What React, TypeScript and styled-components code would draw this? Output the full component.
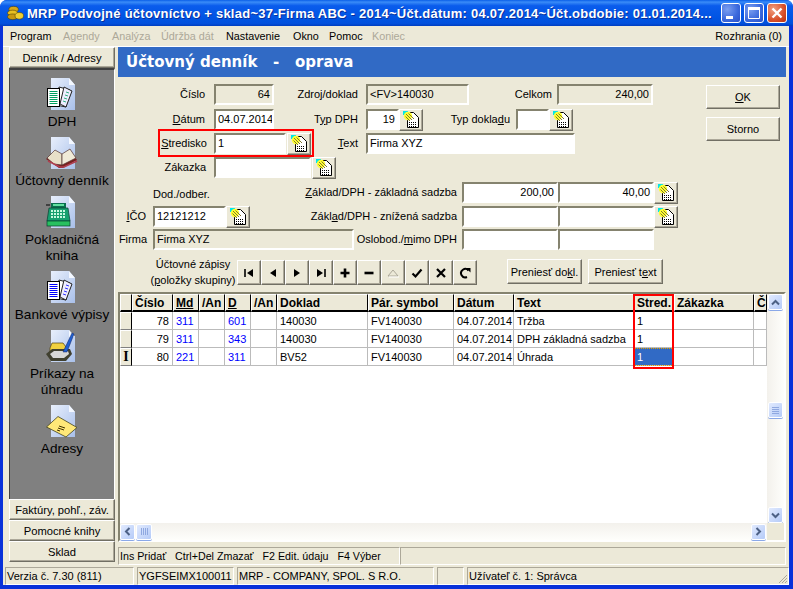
import React from 'react';
import styled, { createGlobalStyle, css } from 'styled-components';

const Global = createGlobalStyle`
  html, body { margin: 0; padding: 0; background: #fff; }
  body { width: 793px; height: 589px; overflow: hidden; font-family: "Liberation Sans", Arial, sans-serif; font-size: 11px; color: #000; }
  * { box-sizing: border-box; }
`;

const raised = css`
  border: 1px solid;
  border-color: #fff #716f64 #716f64 #fff;
  box-shadow: inset -1px -1px 0 #aca899;
  background: #ece9d8;
`;
const sunken = css`
  border: 2px solid;
  border-color: #85836f #fff #fff #85836f;
`;

const Window = styled.div`
  width: 793px; height: 589px;
  display: flex; flex-direction: column;
  background: #0831d9;
  border-radius: 7px 7px 0 0;
  overflow: hidden;
`;
const TitleBar = styled.div`
  height: 26px; flex: none;
  display: flex; align-items: center;
  padding: 0 6px 0 7px;
  background: linear-gradient(180deg, #0a5fe8 0%, #3a8cf8 8%, #0a5cec 22%, #0054e3 70%, #0250dc 90%, #003dc0 100%);
`;
const TitleText = styled.div`
  flex: 1; min-width: 0; margin-left: 3px;
  color: #fff; font-weight: bold; font-size: 13px; letter-spacing: 0.25px; white-space: nowrap;
  text-shadow: 1px 1px 0 #0a2f9a;
`;
const WinButton = styled.div<{ $close?: boolean }>`
  width: 20px; height: 20px; margin-left: 3px; flex: none;
  border: 1px solid #fff; border-radius: 3px;
  display: flex; align-items: center; justify-content: center;
  background: ${p => p.$close
    ? 'radial-gradient(circle at 30% 30%, #f0a080, #d8502a 60%, #b83010)'
    : 'radial-gradient(circle at 30% 30%, #7a9ef0, #3a68dc 60%, #2a50c8)'};
`;
const Client = styled.div`
  flex: 1; min-height: 0;
  margin: 0 4px 4px 3px;
  background: #ece9d8;
  display: flex; flex-direction: column;
`;
const MenuBar = styled.div`
  height: 21px; flex: none;
  display: flex; align-items: center;
  padding: 0 7px 1px 7px;
  border-bottom: 1px solid #fff;
`;
const MenuItem = styled.span<{ $off?: boolean; $w: number }>`
  width: ${p => p.$w}px; flex: none; white-space: nowrap; font-size: 10.8px;
  color: ${p => p.$off ? '#aca899' : '#000'};
`;
const MenuRight = styled.span`
  margin-left: auto; font-size: 11px;
`;
const Body = styled.div`
  flex: 1; min-height: 0;
  display: flex;
`;
const Sidebar = styled.div`
  width: 106px; margin-left: 6px; flex: none;
  display: flex; flex-direction: column;
  padding-bottom: 1px;
`;
const SideTab = styled.div`
  ${raised}
  height: 21px; flex: none;
  display: flex; align-items: center; justify-content: center;
  font-size: 11.2px;
`;
const NavPanel = styled.div`
  flex: 1; min-height: 0;
  background: #808080;
  border-top: 2px solid #404040;
  border-left: 1px solid #404040;
  border-right: 1px solid #fff;
  padding-top: 8px;
  display: flex; flex-direction: column; align-items: center;
`;
const NavItem = styled.div`
  display: flex; flex-direction: column; align-items: center;
  padding-bottom: 7px;
  width: 100%;
`;
const NavLabel = styled.div`
  margin-top: 3px;
  font-size: 13.6px; line-height: 16px; text-align: center; color: #000;
`;
const Main = styled.div`
  flex: 1; min-width: 0;
  margin: 0 3px 0 3px;
  display: flex; flex-direction: column;
`;
const Banner = styled.div`
  height: 30px; flex: none;
  background: #316ac5;
  color: #fff;
  font-family: "DejaVu Sans", sans-serif;
  font-weight: bold; font-size: 15px;
  display: flex; align-items: center;
  padding-left: 8px;
  white-space: pre;
`;
const FormArea = styled.div`
  flex: none;
  display: flex;
  position: relative;
  height: 215px;
`;
const FormCol = styled.div`
  width: 580px; flex: none;
  display: flex; flex-direction: column;
`;
const FormRow = styled.div<{ $mt: number }>`
  display: flex; align-items: center; height: 21px; margin-top: ${p => p.$mt}px; flex: none;
`;
const Label = styled.div<{ $w: number }>`
  width: ${p => p.$w}px; flex: none; text-align: right; font-size: 11px; white-space: nowrap; padding-bottom: 2px;
`;
const Field = styled.div<{ $w: number; $ml?: number; $ro?: boolean; $right?: boolean }>`
  ${sunken}
  width: ${p => p.$w}px; height: 21px; flex: none;
  margin-left: ${p => p.$ml ?? 0}px;
  background: ${p => p.$ro ? '#ece9d8' : '#fff'};
  font-size: 11px; line-height: 16px;
  padding: 0 2px;
  text-align: ${p => p.$right ? 'right' : 'left'};
  white-space: nowrap; overflow: hidden;
`;
const Lookup = styled.div<{ $ml?: number }>`
  ${raised}
  width: 24px; height: 22px; flex: none;
  margin-left: ${p => p.$ml ?? 0}px;
  display: flex; align-items: center; justify-content: center;
`;
const Side = styled.div`
  margin-left: 8px; padding-top: 8px;
  display: flex; flex-direction: column; gap: 8px;
`;
const DialogButton = styled.div`
  ${raised}
  width: 74px; height: 24px;
  display: flex; align-items: center; justify-content: center;
  font-size: 11px;
`;
const Highlight = styled.div`
  position: absolute; left: 40px; top: 52px; width: 156px; height: 28px;
  border: 2px solid #f00; pointer-events: none;
`;
const DodLabel = styled.div`
  width: 92px; flex: none; font-size: 11px; padding-left: 35px; white-space: nowrap; margin-top: 3px;
`;
const ToolRow = styled.div`
  display: flex; align-items: center; margin-top: 9px; height: 27px; flex: none;
`;
const ToolLabel = styled.div`
  width: 100px; flex: none; margin-left: 25px; margin-right: -6px; text-align: center; font-size: 11px; line-height: 16px;
  padding-bottom: 1px; white-space: nowrap;
`;
const ToolGroup = styled.div`
  display: flex; margin-right: 30px;
`;
const ToolButton = styled.div`
  ${raised}
  width: 24px; height: 25px;
  display: flex; align-items: center; justify-content: center;
`;
const TextButton = styled.div`
  ${raised}
  width: 75px; height: 25px; margin-right: 6px; margin-top: -2px;
  display: flex; align-items: center; justify-content: center;
  font-size: 11px; white-space: nowrap;
`;
const GridFrame = styled.div`
  ${sunken}
  flex: none; height: 250px; width: 668px;
  display: flex; flex-direction: column;
  background: #fff;
`;
const GridTop = styled.div`
  flex: 1; min-height: 0; display: flex;
`;
const GridArea = styled.div`
  width: 647px; flex: none; position: relative; overflow: hidden;
`;
const Table = styled.table`
  border-collapse: separate; border-spacing: 0; table-layout: fixed; width: 647px;
`;
const Th = styled.th<{ $u?: boolean }>`
  height: 18px; padding: 0 2px; text-align: left;
  background: #ece9d8;
  border-top: 1px solid #fff; border-left: 1px solid #fff;
  border-right: 1px solid #000; border-bottom: 2px solid #000;
  font-family: "Liberation Sans", sans-serif; font-size: 12px; font-weight: bold; white-space: nowrap; overflow: hidden;
  text-decoration: ${p => p.$u ? 'underline' : 'none'};
`;
const Td = styled.td<{ $blue?: boolean; $right?: boolean; $sel?: boolean }>`
  height: 18px; padding: 0 3px;
  border-right: 1px solid #bbb; border-bottom: 1px solid #bbb;
  font-size: 11px; white-space: nowrap; overflow: hidden;
  color: ${p => p.$sel ? '#fff' : p.$blue ? '#0000ff' : '#000'};
  text-align: ${p => p.$right ? 'right' : 'left'};
  background: ${p => p.$sel ? '#316ac5' : '#fff'};
  outline: ${p => p.$sel ? '1px dotted #e0a000' : 'none'};
  outline-offset: -1px;
`;
const Indicator = styled.td`
  height: 18px; padding: 0; text-align: center;
  background: #ece9d8;
  border-top: 1px solid #fff; border-left: 1px solid #fff;
  border-right: 1px solid #000; border-bottom: 1px solid #808080;
  font-family: "Liberation Serif", serif; font-size: 14px; font-weight: bold; line-height: 14px;
`;
const ColMark = styled.div`
  position: absolute; left: 513px; top: 0; width: 41px; height: 75px;
  border: 2px solid #f00; pointer-events: none;
`;
const VScroll = styled.div`
  width: 17px; flex: none;
  display: flex; flex-direction: column; align-items: center;
  background: linear-gradient(90deg, #f3f1ec, #fefefb);
`;
const ScrollButton = styled.div`
  width: 15px; height: 16px; flex: none;
  border: 1px solid #fff; border-radius: 2px;
  background: linear-gradient(135deg, #e1eafe, #b5cbf8);
  box-shadow: 0 1px 0 #8aa8e8;
  display: flex; align-items: center; justify-content: center;
`;
const VThumb = styled(ScrollButton)`
  margin-top: 92px; margin-bottom: auto;
`;
const HScroll = styled.div`
  height: 17px; flex: none;
  display: flex; align-items: center;
  background: linear-gradient(180deg, #f3f1ec, #fefefb);
`;
const HThumb = styled(ScrollButton)`
  margin-left: 1px; margin-right: auto; width: 16px;
`;
const Corner = styled.div`
  width: 17px; height: 17px; background: #ece9d8; flex: none; margin-left: 1px;
`;
const Hints = styled.div`
  height: 18px; flex: none; margin-top: 5px;
  display: flex;
`;
const HintCell = styled.div<{ $w?: number }>`
  border: 1px solid; border-color: #aca899 #fff #fff #aca899;
  ${p => p.$w ? `width:${p.$w}px; flex:none;` : 'flex:1;'}
  font-size: 10.7px; line-height: 16px; padding-left: 1px; white-space: pre; overflow: hidden;
`;
const StatusBar = styled.div`
  height: 18px; flex: none; margin-top: 4px;
  display: flex; gap: 3px; padding-left: 2px;
`;
const StatusCell = styled.div<{ $w?: number }>`
  border: 1px solid; border-color: #aca899 #fff #fff #aca899;
  ${p => p.$w ? `width:${p.$w}px; flex:none;` : 'flex:1; position:relative;'}
  font-size: 11px; line-height: 16px; padding-left: 1px; white-space: nowrap; overflow: hidden;
`;
const Grip = styled.svg`
  position: absolute; right: 0; bottom: 0;
`;
const TitleLogo = styled.svg`
  flex: none;
`;

const LookupIcon = () => (
  <svg width="17" height="17" viewBox="0 0 17 17">
    <rect x="0" y="0" width="5" height="4" fill="#00e8e8" />
    <path d="M4.5 1.5H10.5L15.5 6.5V16.5H4.5Z" fill="#fff" stroke="#000" />
    <circle cx="5" cy="5" r="4.2" fill="#ffff30" />
    <path d="M3 3L9 9M5.5 2.5L11 8M2.5 5.5L7 10" stroke="#807830" strokeWidth="1" />
    <path d="M6 11.5H14M6 13.5H14M6 15.5H14" stroke="#000" strokeWidth="1" strokeDasharray="1 1" />
  </svg>
);

const Doc = () => (
  <>
    <path d="M5 0H23L29 7V32H5Z" fill="url(#docg)" />
    <path d="M23 0L29 7H23Z" fill="#f4f8ff" />
  </>
);
const Defs = () => (
  <defs>
    <linearGradient id="docg" x1="0" y1="0" x2="1" y2="1">
      <stop offset="0" stopColor="#e8effc" />
      <stop offset="1" stopColor="#a9c0ea" />
    </linearGradient>
  </defs>
);
const NavSvg = styled.svg`
  display: block; width: 32px; height: 33px; flex: none;
`;
const Sheets = ({ color }: { color: string }) => (
  <>
    <path d="M13 9L24 12L20 29L10 27Z" fill="#fff" stroke="#222" />
    <path d="M18 9L26 13L20 29L14 26Z" fill="#eef" stroke="#222" />
    <path d="M20 14L23 15M19 17L22 18M18 20L21 21M17 23L20 24" stroke={color} strokeWidth=".8" />
    <rect x="1.5" y="10.5" width="12" height="18" fill="#fff" stroke="#000" />
    {[13, 15, 17, 19, 21, 23, 25].map(y => (
      <path key={y} d={`M3.5 ${y + 0.5}H11.5`} stroke={color} strokeWidth="1" />
    ))}
  </>
);
const IconDph = () => (
  <NavSvg viewBox="0 0 32 33"><Defs /><Doc /><Sheets color="#00a060" /></NavSvg>
);
const IconBook = () => (
  <NavSvg viewBox="0 0 32 33"><Defs /><Doc />
    <path d="M0 22L9 14L16 18L24 13L31 23L17 31H13Z" fill="#7a2020" />
    <path d="M1 21L9 13L16 17L16 28L8 27Z" fill="#e8e0c8" stroke="#503030" strokeWidth=".7" />
    <path d="M16 17L24 12L30 21L16 28Z" fill="#f0ead8" stroke="#503030" strokeWidth=".7" />
    <path d="M2 24L14 30H18L31 24" stroke="#b04050" strokeWidth="1.5" fill="none" />
  </NavSvg>
);
const IconCash = () => (
  <NavSvg viewBox="0 0 32 33"><Defs /><Doc />
    <path d="M0 9H4" stroke="#000" />
    <rect x="5" y="7" width="15" height="5" fill="#0a7050" />
    <rect x="7" y="8" width="11" height="2" fill="#60e0a0" />
    <path d="M3 12H22L24 25H1Z" fill="#18a070" stroke="#084030" strokeWidth=".7" />
    {[14, 17, 20].map(y => [5, 8, 11, 14, 17].map(x => (
      <rect key={`${x}-${y}`} x={x} y={y} width="2" height="2" fill="#c8f8e0" />
    )))}
    <rect x="1" y="25" width="23" height="5" fill="#28c060" stroke="#084030" strokeWidth=".7" />
  </NavSvg>
);
const IconBank = () => (
  <NavSvg viewBox="0 0 32 33"><Defs /><Doc /><Sheets color="#0000ff" /></NavSvg>
);
const IconOrder = () => (
  <NavSvg viewBox="0 0 32 33"><Defs /><Doc />
    <path d="M4 18L6 13H17L20 17V24H4Z" fill="#f0d040" stroke="#504010" strokeWidth=".7" />
    <path d="M0 24L6 19H24L26 24L20 31H5Z" fill="#404030" />
    <path d="M4 24L8 21H22L23 24L18 28H7Z" fill="#d8d8d8" />
    <path d="M17 22L26 3L28 4L21 22Z" fill="#2060d0" stroke="#102060" strokeWidth=".5" />
  </NavSvg>
);
const IconMail = () => (
  <NavSvg viewBox="0 0 32 33"><Defs /><Doc />
    <path d="M0.5 22L12 11.5L31 22.5L20 32Z" fill="#ffe878" stroke="#404020" strokeWidth=".8" />
    <path d="M13 21L19 23M12 23L18 25M11 25L14 26" stroke="#403000" strokeWidth="1" />
  </NavSvg>
);
const CoinsIcon = () => (
  <TitleLogo width="17" height="18" viewBox="0 0 18 18">
    <ellipse cx="7" cy="5" rx="5" ry="3" fill="#d8a818" stroke="#504000" strokeWidth=".6" />
    <ellipse cx="6" cy="9" rx="5.5" ry="3" fill="#e8c020" stroke="#504000" strokeWidth=".6" />
    <ellipse cx="6" cy="13" rx="5.5" ry="3" fill="#c89810" stroke="#504000" strokeWidth=".6" />
    <ellipse cx="13" cy="12" rx="4.5" ry="3.5" fill="#f0d030" stroke="#504000" strokeWidth=".6" />
  </TitleLogo>
);
const ToolIcon = ({ children }: { children: React.ReactNode }) => (
  <svg width="12" height="12" viewBox="0 0 12 12">{children}</svg>
);

const navItems = [
  { icon: <IconDph />, lines: ['DPH'] },
  { icon: <IconBook />, lines: ['Účtovný denník'] },
  { icon: <IconCash />, lines: ['Pokladničná', 'kniha'] },
  { icon: <IconBank />, lines: ['Bankové výpisy'] },
  { icon: <IconOrder />, lines: ['Príkazy na', 'úhradu'] },
  { icon: <IconMail />, lines: ['Adresy'] },
];

const colWidths = [12, 41, 26, 26, 26, 26, 91, 86, 60, 120, 40, 80, 13];
const rows = [
  { n: '78', md: '311', d: '601', doc: '140030', text: 'Tržba', mark: '' },
  { n: '79', md: '311', d: '343', doc: '140030', text: 'DPH základná sadzba', mark: '' },
  { n: '80', md: '221', d: '311', doc: 'BV52', text: 'Úhrada', mark: 'I' },
];

export default function App() {
  return (
    <Window>
      <Global />
      <TitleBar>
        <CoinsIcon />
        <TitleText>MRP Podvojné účtovníctvo + sklad~37-Firma ABC - 2014~Účt.dátum: 04.07.2014~Účt.obdobie: 01.01.2014...</TitleText>
        <WinButton>
          <svg width="14" height="14" viewBox="0 0 14 14"><rect x="2" y="10" width="7" height="3" fill="#fff" /></svg>
        </WinButton>
        <WinButton>
          <svg width="14" height="14" viewBox="0 0 14 14"><path d="M1.5 2.5H12.5V12.5H1.5Z" fill="none" stroke="#fff" /><rect x="1" y="1" width="12" height="3" fill="#fff" /></svg>
        </WinButton>
        <WinButton $close>
          <svg width="14" height="14" viewBox="0 0 14 14"><path d="M2.5 2.5L11.5 11.5M11.5 2.5L2.5 11.5" stroke="#fff" strokeWidth="2.4" /></svg>
        </WinButton>
      </TitleBar>
      <Client>
        <MenuBar>
          <MenuItem $w={53}>Program</MenuItem>
          <MenuItem $w={49} $off>Agendy</MenuItem>
          <MenuItem $w={49} $off>Analýza</MenuItem>
          <MenuItem $w={65} $off>Údržba dát</MenuItem>
          <MenuItem $w={67}>Nastavenie</MenuItem>
          <MenuItem $w={36}>Okno</MenuItem>
          <MenuItem $w={43}>Pomoc</MenuItem>
          <MenuItem $w={40} $off>Koniec</MenuItem>
          <MenuRight>Rozhrania (0)</MenuRight>
        </MenuBar>
        <Body>
          <Sidebar>
            <SideTab>Denník / Adresy</SideTab>
            <NavPanel>
              {navItems.map(item => (
                <NavItem key={item.lines[0]}>
                  {item.icon}
                  <NavLabel>{item.lines.map(l => <div key={l}>{l}</div>)}</NavLabel>
                </NavItem>
              ))}
            </NavPanel>
            <SideTab>Faktúry, pohľ., záv.</SideTab>
            <SideTab>Pomocné knihy</SideTab>
            <SideTab>Sklad</SideTab>
          </Sidebar>
          <Main>
            <Banner>{'Účtovný denník   -   oprava'}</Banner>
            <FormArea>
              <FormCol>
                <FormRow $mt={7}>
                  <Label $w={87}>Číslo</Label>
                  <Field $w={60} $ml={9} $ro $right>64</Field>
                  <Label $w={84}>Zdroj/doklad</Label>
                  <Field $w={103} $ml={8} $ro>&lt;FV&gt;140030</Field>
                  <Label $w={83}>Celkom</Label>
                  <Field $w={96} $ml={5} $ro $right>240,00</Field>
                </FormRow>
                <FormRow $mt={4}>
                  <Label $w={87}><u>D</u>átum</Label>
                  <Field $w={60} $ml={9}>04.07.2014</Field>
                  <Label $w={84}>T<u>y</u>p DPH</Label>
                  <Field $w={33} $ml={8} $right>19</Field>
                  <Lookup><LookupIcon /></Lookup>
                  <Label $w={87}>Typ dokla<u>d</u>u</Label>
                  <Field $w={33} $ml={6} />
                  <Lookup><LookupIcon /></Lookup>
                </FormRow>
                <FormRow $mt={3}>
                  <Label $w={89}><u>S</u>tredisko</Label>
                  <Field $w={72} $ml={7}>1</Field>
                  <Lookup $ml={1}><LookupIcon /></Lookup>
                  <Label $w={47}><u>T</u>ext</Label>
                  <Field $w={209} $ml={8}>Firma XYZ</Field>
                </FormRow>
                <FormRow $mt={3}>
                  <Label $w={88}>Zákazka</Label>
                  <Field $w={97} $ml={8} />
                  <Lookup $ml={1}><LookupIcon /></Lookup>
                </FormRow>
                <FormRow $mt={4}>
                  <DodLabel>Dod./odber.</DodLabel>
                  <Label $w={247}><u>Z</u>áklad/DPH - základná sadzba</Label>
                  <Field $w={96} $ml={5} $right>200,00</Field>
                  <Field $w={96} $right>40,00</Field>
                  <Lookup><LookupIcon /></Lookup>
                </FormRow>
                <FormRow $mt={3}>
                  <Label $w={28}><u>I</u>ČO</Label>
                  <Field $w={73} $ml={7}>12121212</Field>
                  <Lookup><LookupIcon /></Lookup>
                  <Label $w={207}>Zákl<u>a</u>d/DPH - znížená sadzba</Label>
                  <Field $w={96} $ml={5} />
                  <Field $w={96} />
                  <Lookup><LookupIcon /></Lookup>
                </FormRow>
                <FormRow $mt={2}>
                  <Label $w={29}>Firma</Label>
                  <Field $w={201} $ml={6} $ro>Firma XYZ</Field>
                  <Label $w={103}>Oslobod./<u>m</u>imo DPH</Label>
                  <Field $w={96} $ml={5} />
                  <Field $w={96} />
                </FormRow>
                <ToolRow>
                  <ToolLabel>Účtovné zápisy<br />(<u>p</u>oložky skupiny)</ToolLabel>
                  <ToolGroup>
                    <ToolButton><ToolIcon><path d="M2 2V10" stroke="#000" strokeWidth="1.6" /><path d="M10 2V10L4 6Z" fill="#000" /></ToolIcon></ToolButton>
                    <ToolButton><ToolIcon><path d="M9 2V10L3 6Z" fill="#000" /></ToolIcon></ToolButton>
                    <ToolButton><ToolIcon><path d="M3 2V10L9 6Z" fill="#000" /></ToolIcon></ToolButton>
                    <ToolButton><ToolIcon><path d="M10 2V10" stroke="#000" strokeWidth="1.6" /><path d="M2 2V10L8 6Z" fill="#000" /></ToolIcon></ToolButton>
                    <ToolButton><ToolIcon><path d="M6 1.5V10.5M1.5 6H10.5" stroke="#000" strokeWidth="2.6" /></ToolIcon></ToolButton>
                    <ToolButton><ToolIcon><path d="M1.5 6H10.5" stroke="#000" strokeWidth="2.6" /></ToolIcon></ToolButton>
                    <ToolButton><ToolIcon><path d="M1 9H11L6 3Z" fill="none" stroke="#aca899" /><path d="M2 10H12" stroke="#fff" /></ToolIcon></ToolButton>
                    <ToolButton><ToolIcon><path d="M1.5 6.5L4.5 9.5L10.5 2.5" fill="none" stroke="#000" strokeWidth="2.2" /></ToolIcon></ToolButton>
                    <ToolButton><ToolIcon><path d="M2 2L10 10M10 2L2 10" stroke="#000" strokeWidth="2.2" /></ToolIcon></ToolButton>
                    <ToolButton><ToolIcon><path d="M9.5 3.5A4.2 4.2 0 1 0 8 10" fill="none" stroke="#000" strokeWidth="2" /><path d="M7 1H11.5V5.5Z" fill="#000" /></ToolIcon></ToolButton>
                  </ToolGroup>
                  <TextButton>Preniesť do<u>k</u>l.</TextButton>
                  <TextButton>Preniesť t<u>e</u>xt</TextButton>
                </ToolRow>
              </FormCol>
              <Side>
                <DialogButton><u>O</u>K</DialogButton>
                <DialogButton>Storno</DialogButton>
              </Side>
              <Highlight />
            </FormArea>
            <GridFrame>
              <GridTop>
                <GridArea>
                  <Table>
                    <colgroup>{colWidths.map((w, i) => <col key={i} style={{ width: w }} />)}</colgroup>
                    <thead>
                      <tr>
                        <Th />
                        <Th>Číslo</Th>
                        <Th $u>Md</Th>
                        <Th>/An</Th>
                        <Th $u>D</Th>
                        <Th>/An</Th>
                        <Th>Doklad</Th>
                        <Th>Pár. symbol</Th>
                        <Th>Dátum</Th>
                        <Th>Text</Th>
                        <Th>Stred.</Th>
                        <Th>Zákazka</Th>
                        <Th>Čí</Th>
                      </tr>
                    </thead>
                    <tbody>
                      {rows.map((r, i) => (
                        <tr key={r.n}>
                          <Indicator>{r.mark}</Indicator>
                          <Td $right>{r.n}</Td>
                          <Td $blue>{r.md}</Td>
                          <Td />
                          <Td $blue>{r.d}</Td>
                          <Td />
                          <Td>{r.doc}</Td>
                          <Td>FV140030</Td>
                          <Td>04.07.2014</Td>
                          <Td>{r.text}</Td>
                          <Td $sel={i === 2}>1</Td>
                          <Td />
                          <Td />
                        </tr>
                      ))}
                    </tbody>
                  </Table>
                  <ColMark />
                </GridArea>
                <VScroll>
                  <ScrollButton><svg width="9" height="7" viewBox="0 0 9 7"><path d="M1 5.5L4.5 2L8 5.5" fill="none" stroke="#4d6185" strokeWidth="2" /></svg></ScrollButton>
                  <VThumb><svg width="9" height="9" viewBox="0 0 9 9"><path d="M1 1.5H8M1 3.5H8M1 5.5H8M1 7.5H8" stroke="#8fa8e0" /></svg></VThumb>
                  <ScrollButton><svg width="9" height="7" viewBox="0 0 9 7"><path d="M1 1.5L4.5 5L8 1.5" fill="none" stroke="#4d6185" strokeWidth="2" /></svg></ScrollButton>
                </VScroll>
              </GridTop>
              <HScroll>
                <ScrollButton><svg width="7" height="9" viewBox="0 0 7 9"><path d="M5.5 1L2 4.5L5.5 8" fill="none" stroke="#4d6185" strokeWidth="2" /></svg></ScrollButton>
                <HThumb><svg width="9" height="9" viewBox="0 0 9 9"><path d="M1.5 1V8M3.5 1V8M5.5 1V8M7.5 1V8" stroke="#8fa8e0" /></svg></HThumb>
                <ScrollButton><svg width="7" height="9" viewBox="0 0 7 9"><path d="M1.5 1L5 4.5L1.5 8" fill="none" stroke="#4d6185" strokeWidth="2" /></svg></ScrollButton>
                <Corner />
              </HScroll>
            </GridFrame>
            <Hints>
              <HintCell $w={282}>{'Ins Pridať   Ctrl+Del Zmazať   F2 Edit. údaju   F4 Výber'}</HintCell>
              <HintCell />
            </Hints>
          </Main>
        </Body>
        <StatusBar>
          <StatusCell $w={129}>Verzia č. 7.30 (811)</StatusCell>
          <StatusCell $w={97}>YGFSEIMX100011</StatusCell>
          <StatusCell $w={197}>MRP - COMPANY, SPOL. S R.O.</StatusCell>
          <StatusCell $w={27} />
          <StatusCell>
            Užívateľ č. 1: Správca
            <Grip width="12" height="12" viewBox="0 0 12 12"><path d="M11 3L3 11M11 6L6 11M11 9L9 11" stroke="#aca899" strokeWidth="1" /></Grip>
          </StatusCell>
        </StatusBar>
      </Client>
    </Window>
  );
}
